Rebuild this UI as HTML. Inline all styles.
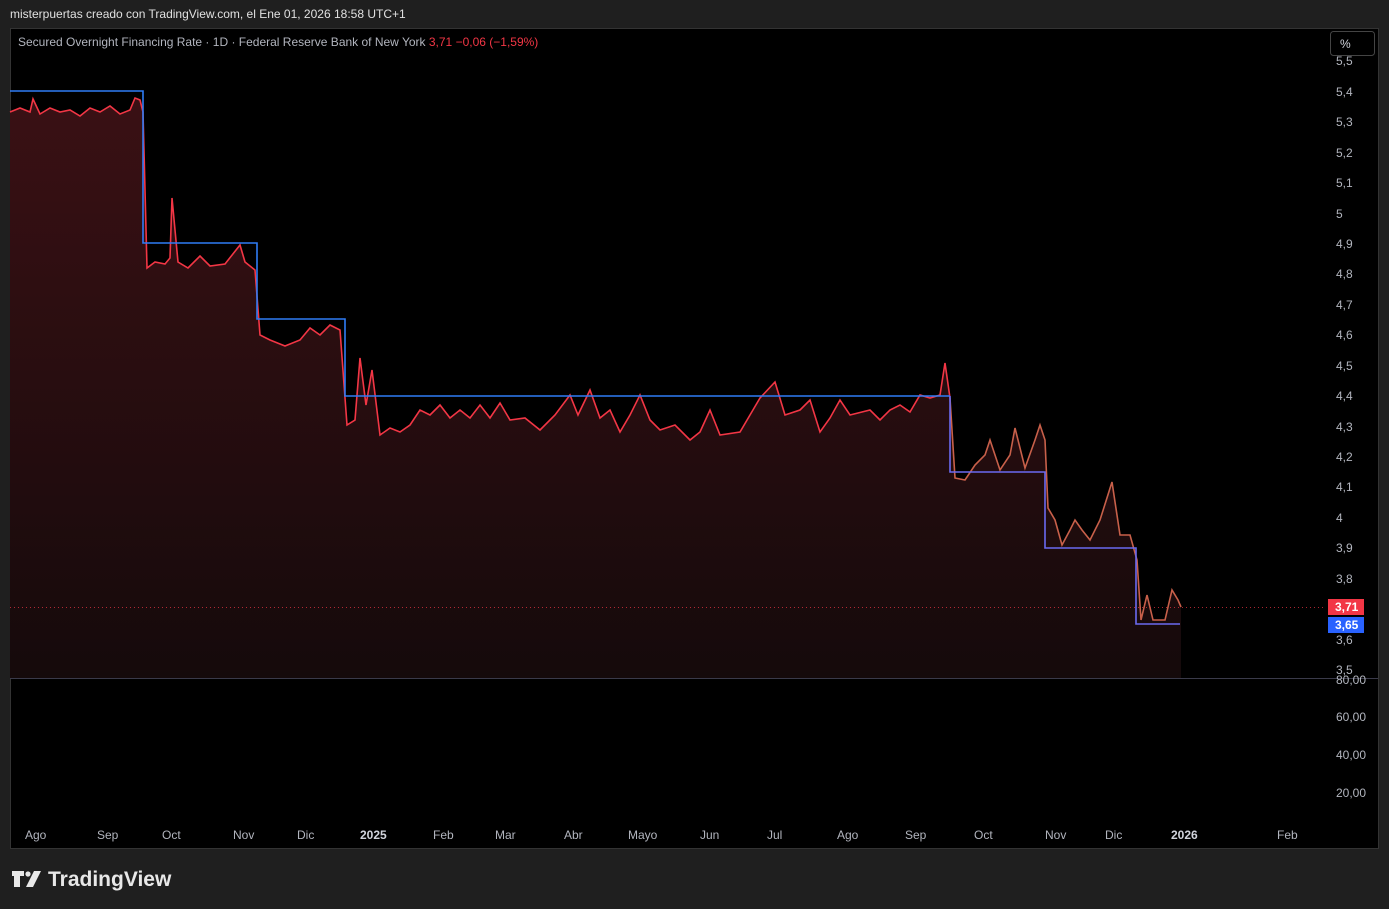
<!DOCTYPE html>
<html><head><meta charset="utf-8"><style>
body{margin:0;width:1389px;height:909px;background:#1f1f1f;font-family:"Liberation Sans",sans-serif;overflow:hidden;position:relative}
.t{position:absolute;color:#d1d4dc;font-size:12px;white-space:nowrap}
</style></head><body>
<div class="t" style="left:10px;top:7px;color:#e0e0e0">misterpuertas creado con TradingView.com, el Ene 01, 2026 18:58 UTC+1</div>
<svg style="position:absolute;left:0;top:0" width="1389" height="909" font-family="Liberation Sans, sans-serif">
<defs><linearGradient id="g" x1="0" y1="0" x2="0" y2="1"><stop offset="0" stop-color="#3a1014"/><stop offset="1" stop-color="#150a0b"/></linearGradient></defs>
<rect x="10.5" y="28.5" width="1368" height="820" fill="#000" stroke="#333"/>
<polygon fill="url(#g)" points="10,112 20,108 30,112 33,99 40,114 50,108 60,112 70,110 80,116 90,108 100,112 110,106 120,114 130,110 135,98 140,100 143,112 147,268 155,262 165,264 170,258 172,198 178,262 188,268 200,256 210,266 225,264 240,245 245,262 255,270 260,335 270,340 285,346 300,340 310,328 320,335 330,325 340,330 347,425 355,420 360,358 366,405 372,370 380,435 390,428 400,432 410,425 420,410 430,415 440,405 450,418 460,410 470,418 480,405 490,418 500,403 510,420 525,418 540,430 555,415 570,395 578,415 590,390 600,418 610,410 620,432 630,415 640,395 650,420 660,430 675,425 690,440 700,432 710,410 720,435 740,432 750,415 760,398 775,382 785,415 800,410 810,400 820,432 830,418 840,400 850,415 870,410 880,420 890,410 900,405 910,412 920,395 930,398 940,395 945,363 950,398 955,478 965,480 975,465 985,455 990,440 1000,470 1010,455 1015,428 1025,468 1035,440 1040,425 1045,440 1048,508 1055,520 1062,545 1070,530 1075,520 1082,530 1090,540 1100,520 1112,482 1120,535 1130,535 1137,560 1141,620 1147,595 1153,620 1165,620 1172,590 1178,600 1181,607 1181,678 10,678"/>
<polyline fill="none" stroke="#f23645" stroke-width="1.6" points="10,112 20,108 30,112 33,99 40,114 50,108 60,112 70,110 80,116 90,108 100,112 110,106 120,114 130,110 135,98 140,100 143,112 147,268 155,262 165,264 170,258 172,198 178,262 188,268 200,256 210,266 225,264 240,245 245,262 255,270 260,335 270,340 285,346 300,340 310,328 320,335 330,325 340,330 347,425 355,420 360,358 366,405 372,370 380,435 390,428 400,432 410,425 420,410 430,415 440,405 450,418 460,410 470,418 480,405 490,418 500,403 510,420 525,418 540,430 555,415 570,395 578,415 590,390 600,418 610,410 620,432 630,415 640,395 650,420 660,430 675,425 690,440 700,432 710,410 720,435 740,432 750,415 760,398 775,382 785,415 800,410 810,400 820,432 830,418 840,400 850,415 870,410 880,420 890,410 900,405 910,412 920,395 930,398 940,395 945,363 950,398"/>
<polyline fill="none" stroke="#c8604a" stroke-width="1.6" points="950,398 955,478 965,480 975,465 985,455 990,440 1000,470 1010,455 1015,428 1025,468 1035,440 1040,425 1045,440 1048,508 1055,520 1062,545 1070,530 1075,520 1082,530 1090,540 1100,520 1112,482 1120,535 1130,535 1137,560 1141,620 1147,595 1153,620 1165,620 1172,590 1178,600 1181,607"/>
<polyline fill="none" stroke="#2f7cf6" stroke-width="1.6" points="10,91 143,91 143,243 257,243 257,319 345,319 345,396 950,396"/>
<polyline fill="none" stroke="#6a6af0" stroke-width="1.6" points="950,396 950,472 1045,472 1045,548 1136,548 1136,624 1180,624"/>
<line x1="10" y1="607.5" x2="1325" y2="607.5" stroke="#f23645" stroke-dasharray="1 3" opacity=".7"/>
<line x1="10" y1="678.5" x2="1378" y2="678.5" stroke="#3a3a4a"/>
<g fill="#b2b5be" font-size="12">
<text x="1336" y="65">5,5</text><text x="1336" y="96">5,4</text><text x="1336" y="126">5,3</text><text x="1336" y="157">5,2</text><text x="1336" y="187">5,1</text><text x="1336" y="218">5</text><text x="1336" y="248">4,9</text><text x="1336" y="278">4,8</text><text x="1336" y="309">4,7</text><text x="1336" y="339">4,6</text><text x="1336" y="370">4,5</text><text x="1336" y="400">4,4</text><text x="1336" y="431">4,3</text><text x="1336" y="461">4,2</text><text x="1336" y="491">4,1</text><text x="1336" y="522">4</text><text x="1336" y="552">3,9</text><text x="1336" y="583">3,8</text><text x="1336" y="644">3,6</text><text x="1336" y="674">3,5</text>
<text x="1336" y="684">80,00</text><text x="1336" y="721">60,00</text><text x="1336" y="759">40,00</text><text x="1336" y="797">20,00</text>
<text x="25" y="839">Ago</text><text x="97" y="839">Sep</text><text x="162" y="839">Oct</text><text x="233" y="839">Nov</text><text x="297" y="839">Dic</text><text x="360" y="839" font-weight="bold" fill="#d1d4dc">2025</text><text x="433" y="839">Feb</text><text x="495" y="839">Mar</text><text x="564" y="839">Abr</text><text x="628" y="839">Mayo</text><text x="700" y="839">Jun</text><text x="767" y="839">Jul</text><text x="837" y="839">Ago</text><text x="905" y="839">Sep</text><text x="974" y="839">Oct</text><text x="1045" y="839">Nov</text><text x="1105" y="839">Dic</text><text x="1171" y="839" font-weight="bold" fill="#d1d4dc">2026</text><text x="1277" y="839">Feb</text>
</g>
<rect x="1328" y="599" width="36" height="16" fill="#f23645"/><text x="1335" y="611" fill="#fff" font-size="12" font-weight="bold">3,71</text>
<rect x="1328" y="617" width="36" height="16" fill="#2962ff"/><text x="1335" y="629" fill="#fff" font-size="12" font-weight="bold">3,65</text>
<rect x="1330.5" y="31.5" width="44" height="24" rx="3" fill="#000" stroke="#444"/><text x="1340" y="48" fill="#d1d4dc" font-size="12">%</text>
<text x="18" y="46" fill="#b2b5be" font-size="12">Secured Overnight Financing Rate · 1D · Federal Reserve Bank of New York <tspan fill="#f23645">3,71  −0,06 (−1,59%)</tspan></text>
<g fill="#e8e8e8"><path d="M12 871h12v5h-4v11h-6v-11h-2z"/><circle cx="28" cy="874" r="2.6"/><path d="M34 871h7l-8 16h-7z"/></g>
<text x="48" y="886" fill="#e8e8e8" font-size="21" font-weight="bold">TradingView</text>
</svg>
</body></html>
